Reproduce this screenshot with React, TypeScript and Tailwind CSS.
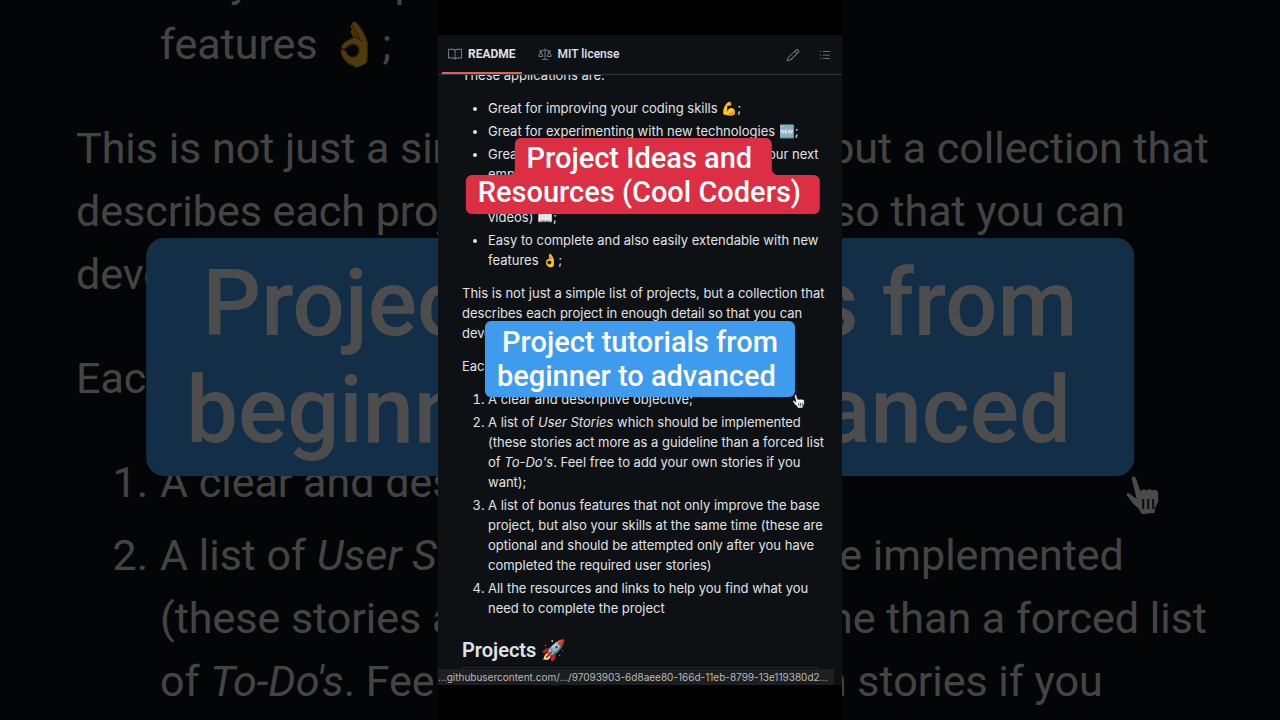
import type { ReactNode } from "react";
import { GoBook, GoLaw, GoListUnordered, GoPencil } from "react-icons/go";

const HandCursor = (props: { className: string }) => {
	return (
		<svg viewBox="0 0 24 26" className={props.className} aria-hidden="true">
			<path
				d="M5.2 1.2c1.2-.5 2.2.3 2.7 1.8l2.2 6.6 1.5-1 2 .8 1.8-1 1.8 1 2.1-.6 1.7 2.2v5.6l-2 4.4-.2 2.8-8.4.8-1.9-3.4-3.6-3.2-3.6-5c-.7-1.5.7-2.6 2.2-1.7l3.3 2.4L4.2 3.2c-.2-1 .1-1.7 1-2Z"
				fill="#f4f4f4"
				stroke="#101010"
				strokeWidth="1"
			/>
			<path d="M11.5 15v6M14.5 15v6M17.5 15v6" stroke="#333" strokeWidth="1.3" />
		</svg>
	);
};

const ConcaveCorner = (props: { className: string }) => {
	return (
		<svg viewBox="0 0 6 6" className={props.className} aria-hidden="true">
			<path d="M0 0A6 6 0 0 0 6 6H0Z" fill="#dc2f43" />
		</svg>
	);
};

const BackdropItem = (props: { marker: string; children: ReactNode }) => {
	return (
		<li className="flex">
			<span className="w-[152px] shrink-0 pr-3 text-right">{props.marker}</span>
			<span>{props.children}</span>
		</li>
	);
};

const Backdrop = () => {
	return (
		<div
			className="absolute inset-0 overflow-hidden bg-[#0d1114] text-[43px] leading-[63px] whitespace-nowrap text-[#e0e2e5] opacity-30"
			aria-hidden="true"
		>
			<div className="-mt-[50px] flex flex-col gap-[41px]">
				<ul className="pl-[160px]">
					<li>
						Easy to complete and also easily extendable with new
						<br />
						features 👌;
					</li>
				</ul>
				<p className="pl-[76px]">
					This is not just a simple list of projects, but a collection that
					<br />
					describes each project in enough detail so that you can
					<br />
					develop it from the ground up!
				</p>
				<p className="pl-[76px]">Each project has:</p>
				<ol className="flex flex-col gap-[10px] pl-2">
					<BackdropItem marker="1.">A clear and descriptive objective;</BackdropItem>
					<BackdropItem marker="2.">
						A list of <em>User Stories</em> which should be implemented
						<br />
						(these stories act more as a guideline than a forced list
						<br />
						of <em>To-Do's</em>. Feel free to add your own stories if you
					</BackdropItem>
				</ol>
			</div>
			<div className="absolute top-[238px] left-1/2 -translate-x-1/2 rounded-[18px] bg-[#3f9bee] px-10 py-3 text-center text-[92px] leading-[107px] font-medium whitespace-pre text-white">
				<p>Project tutorials from</p>
				<p>{"beginner to advanced "}</p>
			</div>
			<HandCursor className="absolute top-[474px] left-[1124px] w-10" />
		</div>
	);
};

const ReadmeTabs = () => {
	return (
		<header className="flex h-10 shrink-0 items-stretch justify-between border-b border-[#30363b] px-1 text-xs text-[#e0e2e5]">
			<nav className="flex gap-2.5">
				<a href="#readme" className="flex items-center gap-1.5 border-b-2 border-[#d9665a] px-1.5 font-bold">
					<GoBook className="size-3.5 text-[#80878f]" />
					README
				</a>
				<a href="#license" className="flex items-center gap-1.5 border-b-2 border-transparent px-1.5 font-medium">
					<GoLaw className="size-3.5 text-[#80878f]" />
					MIT license
				</a>
			</nav>
			<div className="flex items-center gap-[18px] pr-1.5 text-[#80878f]">
				<button type="button" aria-label="Edit file">
					<GoPencil className="size-3.5" />
				</button>
				<button type="button" aria-label="Outline">
					<GoListUnordered className="size-3.5" />
				</button>
			</div>
		</header>
	);
};

const Readme = () => {
	return (
		<article className="-mt-2.5 flex flex-col gap-[13px] px-6 font-['Inter',sans-serif] text-[13px] leading-5 whitespace-nowrap text-[#e0e2e5]">
			<p>These applications are:</p>
			<ul className="flex list-disc flex-col gap-[3px] pl-[26px]">
				<li>Great for improving your coding skills 💪;</li>
				<li>Great for experimenting with new technologies 🆕;</li>
				<li>
					Great for adding to your portfolio to impress your next
					<br />
					employer/client 💰;
				</li>
				<li>
					Great for using as examples in tutorials (articles or
					<br />
					videos) 📖;
				</li>
				<li>
					Easy to complete and also easily extendable with new
					<br />
					features 👌;
				</li>
			</ul>
			<p>
				This is not just a simple list of projects, but a collection that
				<br />
				describes each project in enough detail so that you can
				<br />
				develop it from the ground up!
			</p>
			<p>Each project has:</p>
			<ol className="flex list-decimal flex-col gap-[3px] pl-[26px]">
				<li>A clear and descriptive objective;</li>
				<li>
					A list of <em>User Stories</em> which should be implemented
					<br />
					(these stories act more as a guideline than a forced list
					<br />
					of <em>To-Do's</em>. Feel free to add your own stories if you
					<br />
					want);
				</li>
				<li>
					A list of bonus features that not only improve the base
					<br />
					project, but also your skills at the same time (these are
					<br />
					optional and should be attempted only after you have
					<br />
					completed the required user stories)
				</li>
				<li>
					All the resources and links to help you find what you
					<br />
					need to complete the project
				</li>
			</ol>
			<h2 className="mt-[7px] border-b border-[#24292e] pb-[5px] font-['Roboto',sans-serif] text-xl leading-6 font-semibold">
				Projects 🚀
			</h2>
		</article>
	);
};

const TitleCaption = () => {
	return (
		<div className="absolute top-[138px] left-[205px] flex -translate-x-1/2 flex-col items-center text-[29px] font-medium whitespace-pre text-white">
			<div className="relative rounded-t-md bg-[#dc2f43] px-3 pt-1 leading-[33px]">
				{"Project Ideas and "}
				<ConcaveCorner className="absolute bottom-0 left-full size-1.5" />
				<ConcaveCorner className="absolute right-full bottom-0 size-1.5 -scale-x-100" />
			</div>
			<div className="rounded-md bg-[#dc2f43] px-3 pb-1 leading-[35px]">{"Resources (Cool Coders) "}</div>
		</div>
	);
};

const TutorialCaption = () => {
	return (
		<div className="absolute top-[321px] left-1/2 -translate-x-1/2 rounded-md bg-[#3f9bee] px-3 py-1 text-center text-[29px] leading-[34px] font-medium whitespace-pre text-white">
			<p>Project tutorials from</p>
			<p>{"beginner to advanced "}</p>
		</div>
	);
};

export default function App() {
	return (
		<main className="relative flex h-screen justify-center overflow-hidden bg-black font-['Roboto','Inter',sans-serif]">
			<Backdrop />
			<section className="relative flex aspect-[101/180] h-full min-w-0 flex-col bg-black py-[35px]">
				<div className="flex min-h-0 flex-1 flex-col bg-[#0d1114]">
					<ReadmeTabs />
					<div className="min-h-0 flex-1 overflow-hidden">
						<Readme />
					</div>
					<p className="mr-2 h-4 shrink-0 bg-[#1d1e20] font-['Inter',sans-serif] text-[10px] leading-4 whitespace-nowrap text-[#b8babc]">
						…githubusercontent.com/…/97093903-6d8aee80-166d-11eb-8799-13e119380d2…
					</p>
				</div>
				<TitleCaption />
				<TutorialCaption />
				<HandCursor className="absolute top-[394px] left-[354px] w-3.5" />
			</section>
		</main>
	);
}
